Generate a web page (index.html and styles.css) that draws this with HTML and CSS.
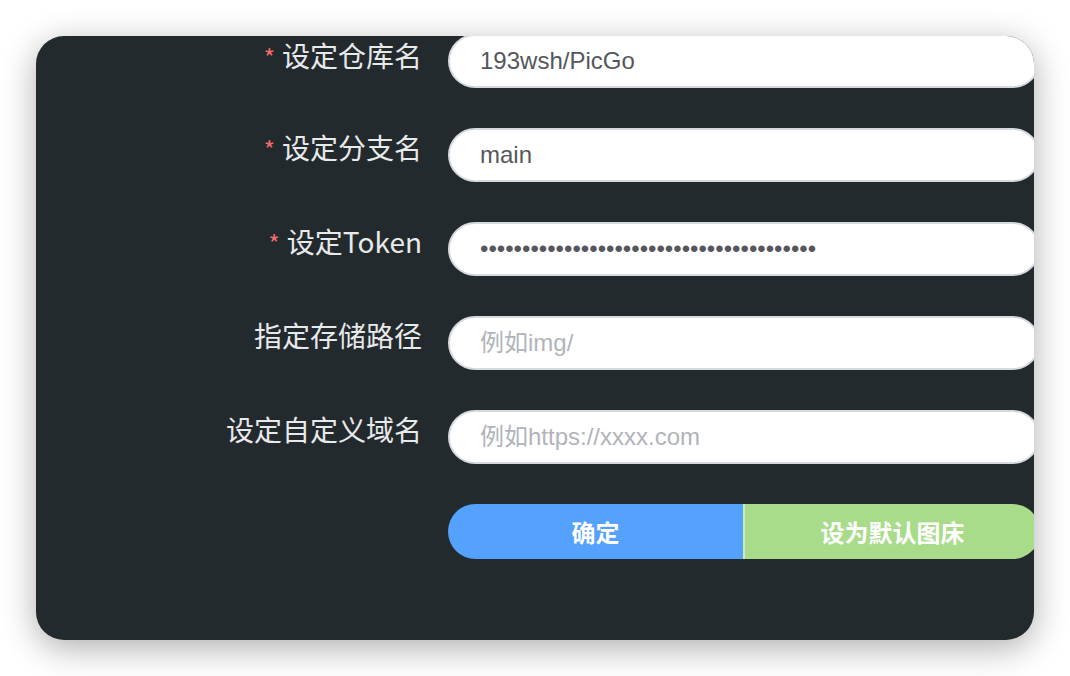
FILE: index.html
```html
<!DOCTYPE html>
<html lang="zh-CN">
<head>
<meta charset="utf-8">
<title>GitHub 图床设置</title>
<link rel="stylesheet" href="styles.css">
</head>
<body>
<div class="window">
  <form class="form">
    <div class="row first">
      <label class="label"><span class="req">*</span>设定仓库名</label>
      <input class="input" type="text" value="193wsh/PicGo">
    </div>
    <div class="row">
      <label class="label"><span class="req">*</span>设定分支名</label>
      <input class="input" type="text" value="main">
    </div>
    <div class="row">
      <label class="label"><span class="req">*</span>设定Token</label>
      <input class="input" type="password" value="ghp_abcdefghijklmnopqrstuvwxyz0123456789">
    </div>
    <div class="row">
      <label class="label">指定存储路径</label>
      <input class="input" type="text" placeholder="例如img/">
    </div>
    <div class="row">
      <label class="label">设定自定义域名</label>
      <input class="input" type="text" placeholder="例如https://xxxx.com">
    </div>
    <div class="row">
      <span class="label"></span>
      <div class="btn-group">
        <button type="button" class="btn primary">确定</button>
        <button type="button" class="btn success">设为默认图床</button>
      </div>
    </div>
  </form>
</div>
</body>
</html>
```
FILE: styles.css
```css
html, body {
  margin: 0;
  padding: 0;
  background: #ffffff;
}

body {
  width: 1070px;
  height: 676px;
  overflow: hidden;
  font-family: "Noto Sans CJK SC", "Noto Sans", sans-serif;
}

.window {
  margin: 36px 0 0 36px;
  width: 998px;
  height: 604px;
  border-radius: 28px;
  overflow: hidden;
  background: #232a2d;
  box-shadow: 0 8px 34px rgba(0, 0, 0, 0.32);
}

.form {
  display: flex;
  flex-direction: column;
  gap: 40px;
}

.row {
  display: flex;
  align-items: flex-start;
}

.first .input {
  margin-top: -2px;
}

.label {
  flex: 0 0 412px;
  box-sizing: border-box;
  padding-right: 26px;
  text-align: right;
  font-size: 28px;
  line-height: 38px;
  color: #e8e9ea;
  white-space: nowrap;
}

.req {
  color: #f56c6c;
  margin-right: 7px;
  font-size: 24px;
}

.input {
  flex: 0 0 592px;
  box-sizing: border-box;
  height: 54px;
  margin: 0;
  padding: 0 30px;
  border: 2px solid #d6d9e0;
  border-radius: 27px;
  background: #ffffff;
  font-family: "Liberation Sans", "Noto Sans CJK SC", sans-serif;
  font-size: 24px;
  color: #55575c;
  outline: none;
}

.input::placeholder {
  color: #b1b4bb;
}

.btn-group {
  flex: 0 0 592px;
  display: flex;
  height: 55px;
  border-radius: 28px;
  overflow: hidden;
}

.btn {
  flex: 1 1 0;
  margin: 0;
  padding: 0;
  border: none;
  font-family: "Noto Sans CJK SC", sans-serif;
  font-weight: 700;
  font-size: 24px;
  color: #ffffff;
  cursor: pointer;
}

.btn.primary {
  background: #55a1fe;
}

.btn.success {
  background: #a8dc8b;
  border-left: 2px solid #cdebbd;
}
```
